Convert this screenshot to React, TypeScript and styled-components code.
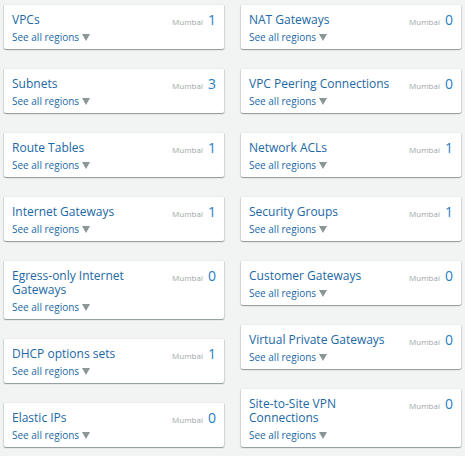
import React from "react";
import styled, { createGlobalStyle } from "styled-components";

const Global = createGlobalStyle`
  html, body { margin: 0; padding: 0; background: #f2f3f3; }
  body { font-family: "Open Sans", Lato, Arial, sans-serif; }
`;

const Page = styled.div`
  display: flex;
  gap: 17px;
  padding: 4px;
  width: 465px;
  box-sizing: border-box;
`;

const Column = styled.div`
  flex: 1 1 0;
  display: flex;
  flex-direction: column;
  gap: 19px;
`;

const Card = styled.div`
  background: #fff;
  border-radius: 2px;
  border-top: 1px solid #eaeded;
  box-shadow: 0 1px 1px 0 rgba(0, 28, 36, 0.25), 1px 1px 1px 0 rgba(0, 28, 36, 0.12),
    -1px 1px 1px 0 rgba(0, 28, 36, 0.12);
  padding: 8px 8px 5px 8px;
  display: flex;
  align-items: flex-start;
  justify-content: space-between;
`;

const Main = styled.div`
  display: flex;
  flex-direction: column;
  max-width: 150px;
`;

const Title = styled.a`
  font-size: 12px;
  line-height: 14px;
  color: #2168a6;
  text-decoration: none;
`;

const SeeAll = styled.div`
  display: flex;
  align-items: center;
  gap: 3px;
  margin-top: 3px;
  font-size: 10px;
  line-height: 14px;
  color: #2168a6;
`;

const Caret = styled.span`
  width: 0;
  height: 0;
  border-left: 4.5px solid transparent;
  border-right: 4.5px solid transparent;
  border-top: 7px solid #8c9696;
  margin-top: 1px;
`;

const Count = styled.div`
  display: flex;
  align-items: baseline;
  gap: 5px;
  line-height: 14px;
`;

const Region = styled.span`
  font-size: 8px;
  color: #9ea6a6;
`;

const Num = styled.span`
  font-size: 14px;
  color: #2480c4;
`;

type Item = { title: string; n: number };

const left: Item[] = [
  { title: "VPCs", n: 1 },
  { title: "Subnets", n: 3 },
  { title: "Route Tables", n: 1 },
  { title: "Internet Gateways", n: 1 },
  { title: "Egress-only Internet Gateways", n: 0 },
  { title: "DHCP options sets", n: 1 },
  { title: "Elastic IPs", n: 0 },
];

const right: Item[] = [
  { title: "NAT Gateways", n: 0 },
  { title: "VPC Peering Connections", n: 0 },
  { title: "Network ACLs", n: 1 },
  { title: "Security Groups", n: 1 },
  { title: "Customer Gateways", n: 0 },
  { title: "Virtual Private Gateways", n: 0 },
  { title: "Site-to-Site VPN Connections", n: 0 },
];

const ResourceCard = ({ item }: { item: Item }) => (
  <Card>
    <Main>
      <Title href="#">{item.title}</Title>
      <SeeAll>
        See all regions <Caret />
      </SeeAll>
    </Main>
    <Count>
      <Region>Mumbai</Region>
      <Num>{item.n}</Num>
    </Count>
  </Card>
);

export default function App() {
  return (
    <>
      <Global />
      <Page>
        <Column>
          {left.map((it) => (
            <ResourceCard key={it.title} item={it} />
          ))}
        </Column>
        <Column>
          {right.map((it) => (
            <ResourceCard key={it.title} item={it} />
          ))}
        </Column>
      </Page>
    </>
  );
}
